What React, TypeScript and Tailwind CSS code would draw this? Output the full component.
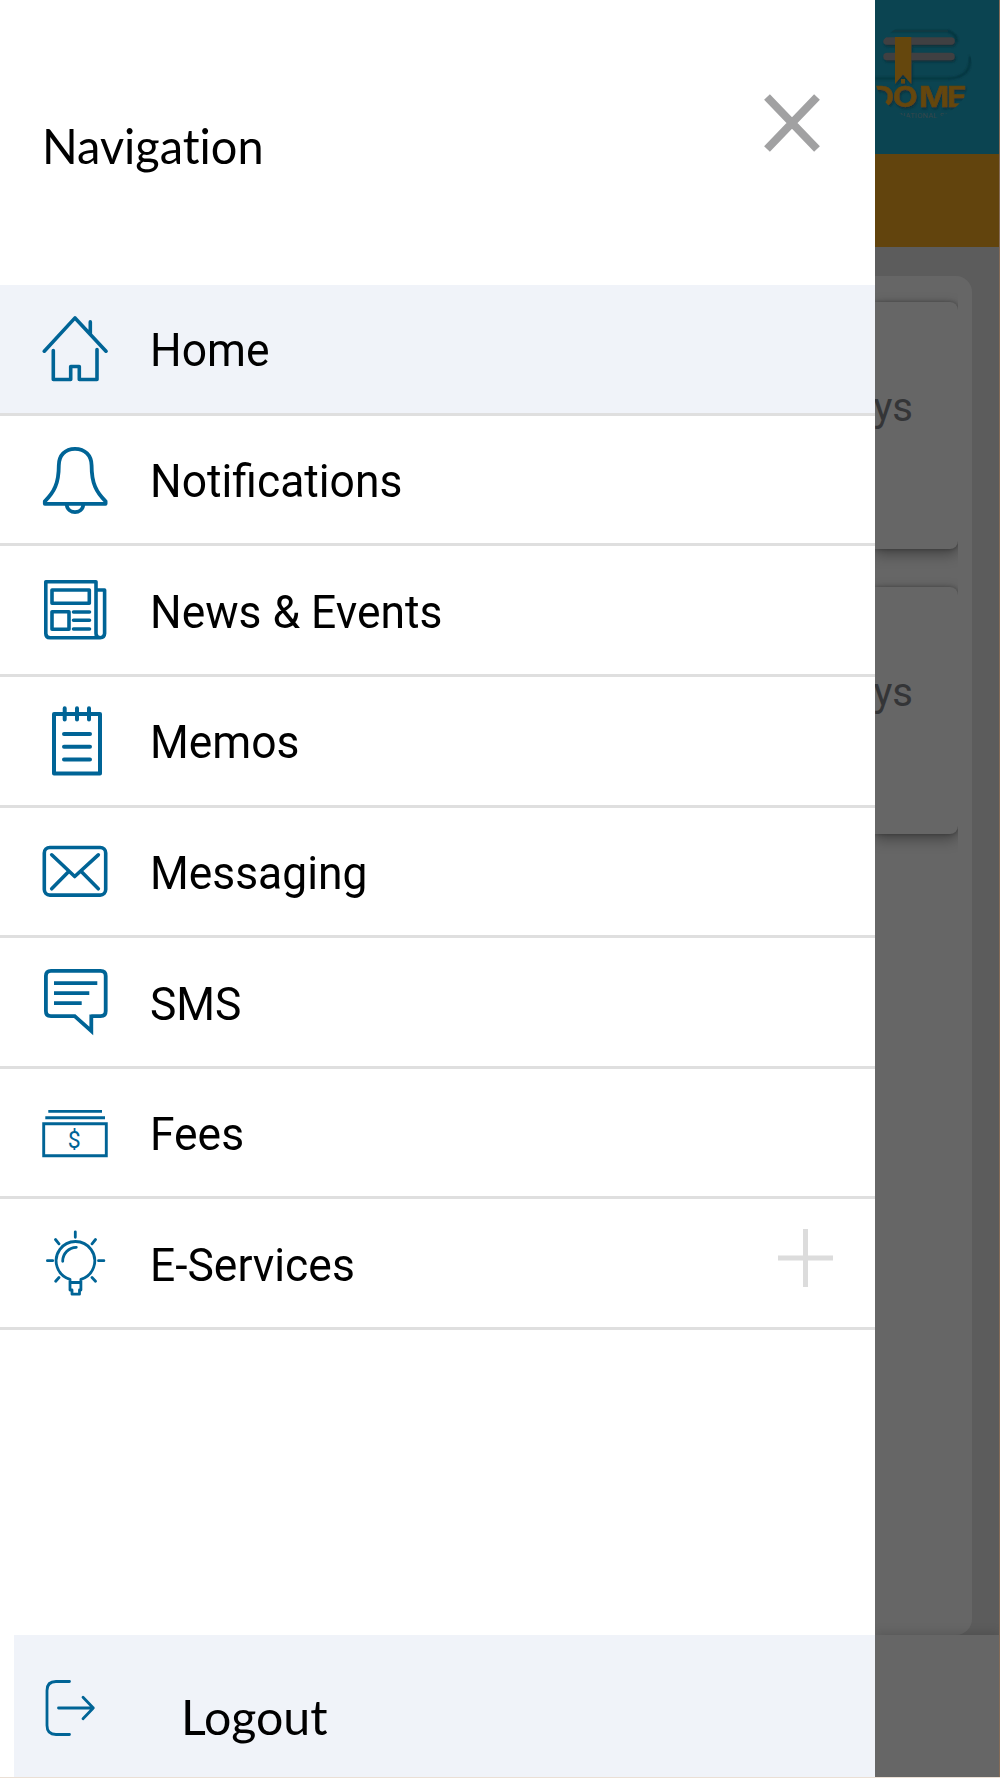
import type { ReactNode } from 'react';
import clsx from 'clsx';

type NavItem = {
  label: string;
  icon: ReactNode;
  active?: boolean;
  expandable?: boolean;
};

const items: NavItem[] = [
  {
    label: 'Home',
    active: true,
    icon: (
      <g strokeWidth="3.6">
        <path d="M2.3 44.2 33 10.9 64 44.2M48.3 14.9V27" />
        <path d="M11.3 43.5V72.5H28.7V59.5H37.3V72.5H55V42.5" />
      </g>
    ),
  },
  {
    label: 'Notifications',
    icon: (
      <g strokeWidth="3.8">
        <path d="M2.8 66.8V64.3C12 55.5 16.8 46.5 16.8 28.5C16.8 18.5 23 11.8 33 11.8S49.6 18.5 49.6 28.5C49.6 46.5 54.4 55.5 63.6 64.3V66.8Z" />
        <path d="M24.7 68C26 77.5 40 77.5 41.3 68" />
      </g>
    ),
  },
  {
    label: 'News & Events',
    icon: (
      <g strokeWidth="3.6">
        <path d="M54 69.7H8Q3.8 69.7 3.8 65.5V13.8H54V65.5Q54 69.7 58.2 69.7T62.6 65.5V22H54M54 69.7H58.2" />
        <path d="M10 22H47.3V35.3H10ZM10 43.7H27V61.3H10ZM31.5 44H47.5M31.5 52.3H47.5M31.5 61H47.5" />
      </g>
    ),
  },
  {
    label: 'Memos',
    icon: (
      <g strokeWidth="4">
        <path d="M12 15.1H58V74.4H12ZM22.7 9.3V20.4M35 9.3V20.4M47 9.3V20.4" />
        <path d="M22 35.1H48M22 47.7H48M22 60.4H48" />
      </g>
    ),
  },
  {
    label: 'Messaging',
    icon: (
      <g strokeWidth="3.6">
        <rect x="2.3" y="18.5" width="61.4" height="47.6" rx="5.5" />
        <path d="M9.7 25.8 32.7 47.5 56.3 25.8M9.7 59.8 26.7 42.5M56.3 59.8 39.3 42.5" />
      </g>
    ),
  },
  {
    label: 'SMS',
    icon: (
      <g strokeWidth="3.8" strokeLinecap="butt" strokeLinejoin="miter">
        <path d="M49.3 56.2H58.5Q63.7 56.2 63.7 51V16Q63.7 10.9 58.5 10.9H9Q3.9 10.9 3.9 16V51Q3.9 56.2 9 56.2H32.7L49.3 71V54.4" />
        <path d="M12 23.2H55.3M12 33.2H47.3M12 43.2H39.7" />
      </g>
    ),
  },
  {
    label: 'Fees',
    icon: (
      <g strokeWidth="2.9" strokeLinecap="butt" strokeLinejoin="miter">
        <path d="M6.3 20.4H60M3.3 26.8H63M1.7 32.8H64.3V64.8H1.7Z" />
        <text x="32.3" y="56.500" textAnchor="middle" fontSize="23" fill="#006496" stroke="none">$</text>
      </g>
    ),
  },
  {
    label: 'E-Services',
    expandable: true,
    icon: (
      <g strokeWidth="2.8">
        <path d="M28 58.3A19.3 19.3 0 1 1 38.9 58.3V69H37.5V73.2H30V69H28ZM28 61.5H38.9M20.7 40.3A13.8 13.8 0 0 1 34.3 26.3" />
        <path d="M33.3 10.8V16.3M5.4 39.7H10.7M56.5 39.7H61.9M13.5 18.5 17 22.8M53.5 18.5 50 22.8M13.7 60.2 17 56.5M53.5 60.2 50 56.5" />
      </g>
    ),
  },
];

function NavRow({ item }: { item: NavItem }) {
  return (
    <li
      className={clsx(
        'flex h-[130.65px] items-center border-b-[3px] border-[#dfdfdf] pl-[42px]',
        item.active && 'bg-[#f0f3f9]',
      )}
    >
      <svg
        className="h-[84px] w-[68px] shrink-0"
        viewBox="0 0 68 84"
        fill="none"
        stroke="#006496"
        strokeLinecap="round"
        strokeLinejoin="round"
      >
        {item.icon}
      </svg>
      <span className="ml-[40px] origin-left scale-x-[0.965] pt-[4px] text-[46px] whitespace-nowrap">
        {item.label}
      </span>
      {item.expandable && (
        <svg className="mr-[41px] mb-[10px] ml-auto h-[58px] w-14" viewBox="0 0 56 58" stroke="#dcdcdc" strokeWidth="5">
          <path d="M0 29H55M27.500 0V58" />
        </svg>
      )}
    </li>
  );
}

function Drawer() {
  return (
    <nav className="flex h-full w-[875px] shrink-0 flex-col bg-white">
      <header className="flex h-[285px] shrink-0 items-start justify-between pl-[42px]">
        <h1 className="mt-[115px] origin-left scale-x-[0.957] font-[Lato,sans-serif] text-[49px] leading-[60px] [font-variant-ligatures:none]">
          Navigation
        </h1>
        <button type="button" aria-label="Close" className="mt-[94px] mr-[54px]">
          <svg className="h-[58px] w-[58px]" viewBox="0 0 58 58" stroke="#a1a1a2" strokeWidth="8">
            <path d="M4 3 54 55M54 3 4 55" />
          </svg>
        </button>
      </header>
      <ul>
        {items.map((item) => (
          <NavRow key={item.label} item={item} />
        ))}
      </ul>
      <div className="mt-auto ml-[14px] flex h-[142px] shrink-0 items-start bg-[#f0f3f9] pl-[28px]">
        <svg
          className="mt-[40px] h-[66px] w-[60px]"
          viewBox="42 1675 60 66"
          fill="none"
          stroke="#006496"
          strokeWidth="2.8"
          strokeLinecap="round"
          strokeLinejoin="round"
        >
          <path d="M69.5 1681.5H56Q47 1681.5 47 1690.5V1725.5Q47 1734.5 56 1734.5H69.5" />
          <path d="M58.5 1708H93.3M83 1697.3 93.3 1708 83 1718.7" />
        </svg>
        <span className="mt-[51px] ml-[79px] origin-left scale-x-[0.985] font-[Lato,sans-serif] text-[49px] leading-[60px]">
          Logout
        </span>
      </div>
    </nav>
  );
}

function SchoolLogo() {
  return (
    <svg className="h-[154px] w-[125px]" viewBox="875 0 125 154" fill="none">
      <defs>
        <clipPath id="badge">
          <circle cx="923" cy="70" r="49.5" />
        </clipPath>
        <filter id="soft" x="-10%" y="-10%" width="120%" height="120%">
          <feGaussianBlur stdDeviation="0.9" />
        </filter>
        <filter id="drop" x="-10%" y="-20%" width="120%" height="150%">
          <feDropShadow dx="1" dy="2" stdDeviation="0.9" floodColor="#07313b" />
        </filter>
      </defs>
      <g clipPath="url(#badge)">
        <g stroke="#07313b" strokeWidth="2" filter="url(#soft)">
          <path d="M884 31H948Q957 34 957 42M970 56Q972 78 948 78.500H875" />
        </g>
        <g filter="url(#drop)">
          <path d="M887 41H951M887 56.500H951" stroke="#3f3f42" strokeWidth="7.500" strokeLinecap="round" />
          <path d="M895 37H911.300V84L903 74.500 895 84Z" fill="#65460b" />
          <path d="M901 79H905V83.500H901Z" fill="#65460b" />
          <g transform="scale(1.12 1)" fontFamily="Inter, sans-serif" fontWeight="700" fontSize="29">
            <text x="777.500 797.200 820.500 845.500" y="107" fill="#65460b" stroke="#65460b" strokeWidth="0.400">
              DOME
            </text>
          </g>
        </g>
        <text x="924" y="117.500" textAnchor="middle" fontSize="7.500" fill="#36474b" textLength="92">
          INTERNATIONAL SCHOOL
        </text>
      </g>
    </svg>
  );
}

function DayCard() {
  return (
    <div className="h-[285px] w-[83px] overflow-hidden pt-[11px]">
      <div className="flex h-[247px] items-center justify-end rounded-r-[8px] bg-[#666] pr-[45px] text-[40px] text-[#343537] shadow-[0_5px_14px_rgba(0,0,0,0.35),0_0_4px_rgba(0,0,0,0.3)]">
        <span className="-mt-[36px]">ys</span>
      </div>
    </div>
  );
}

function DimmedPage() {
  return (
    <main className="flex h-full w-[125px] flex-col overflow-hidden border-r border-[#856b57] bg-[#5c5c5c]">
      <div className="h-[154px] shrink-0 bg-[#0b4451]">
        <SchoolLogo />
      </div>
      <div className="h-[93px] shrink-0 bg-[#62440d]" />
      <div className="mt-[29px] h-[1359px] w-[97px] shrink-0 rounded-r-[16px] bg-[#666] pt-[15px]">
        <DayCard />
        <DayCard />
      </div>
      <div className="flex-1 bg-[#666] shadow-[0_-2px_10px_rgba(0,0,0,0.15)]" />
    </main>
  );
}

export default function App() {
  return (
    <div className="flex h-[1778px] w-[1000px] overflow-hidden border-b border-[#eadfd5] bg-white font-[Roboto,sans-serif] text-black">
      <Drawer />
      <DimmedPage />
    </div>
  );
}
